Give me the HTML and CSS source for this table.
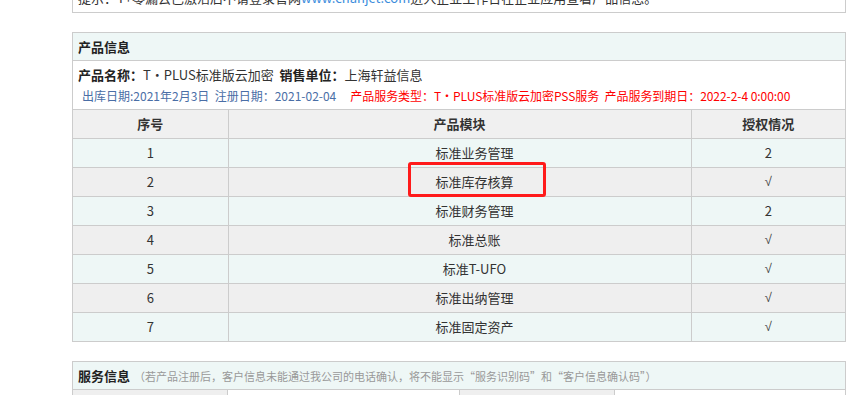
FILE: index.html
```html
<!DOCTYPE html>
<html lang="zh-CN">
<head>
<meta charset="utf-8">
<title>产品信息</title>
<link rel="stylesheet" href="styles.css">
</head>
<body>
<div class="page">
  <div class="box tip">提示：T+零漏云已激活后不请登录官网<a class="link" href="#">www.chanjet.com</a>进入企业工作台在企业应用查看产品信息。</div>

  <div class="box product">
    <div class="box-head">产品信息</div>
    <div class="info">
      <div class="line1"><b>产品名称：</b>T・PLUS标准版云加密&nbsp;&nbsp;<b>销售单位：</b>上海轩益信息</div>
      <div class="line2"><span class="blue">出库日期:2021年2月3日&nbsp;&nbsp;注册日期：2021-02-04</span><span class="red">产品服务类型：T・PLUS标准版云加密PSS服务&nbsp;&nbsp;产品服务到期日：2022-2-4 0:00:00</span></div>
    </div>
    <table class="grid">
      <colgroup><col class="c1"><col><col class="c3"></colgroup>
      <thead>
        <tr><th>序号</th><th>产品模块</th><th>授权情况</th></tr>
      </thead>
      <tbody>
        <tr><td>1</td><td>标准业务管理</td><td>2</td></tr>
        <tr><td>2</td><td>标准库存核算</td><td><span class="ok">√</span></td></tr>
        <tr><td>3</td><td>标准财务管理</td><td>2</td></tr>
        <tr><td>4</td><td>标准总账</td><td><span class="ok">√</span></td></tr>
        <tr><td>5</td><td>标准T-UFO</td><td><span class="ok">√</span></td></tr>
        <tr><td>6</td><td>标准出纳管理</td><td><span class="ok">√</span></td></tr>
        <tr><td>7</td><td>标准固定资产</td><td><span class="ok">√</span></td></tr>
      </tbody>
    </table>
    <div class="mark"></div>
  </div>

  <div class="box service">
    <div class="box-head">服务信息<span class="note">（若产品注册后，客户信息未能通过我公司的电话确认，将不能显示“服务识别码”和“客户信息确认码”）</span></div>
    <table class="kv">
      <tr><td class="k">&nbsp;</td><td class="v">&nbsp;</td><td class="k">&nbsp;</td><td class="v">&nbsp;</td></tr>
    </table>
  </div>
</div>
</body>
</html>
```

FILE: styles.css
```css
html, body {
  margin: 0;
  padding: 0;
  background: #fff;
  overflow: hidden;
}
body {
  font-family: "Noto Sans CJK SC", "Open Sans", sans-serif;
  font-size: 13px;
  color: #333;
}
.page {
  margin-left: 72px;
  width: 774px;
  margin-top: -17px;
}
.box {
  border: 1px solid #cccccc;
  background: #fff;
}
.tip {
  padding: 3px 5px;
  line-height: 22px;
  color: #333;
}
.link {
  color: #3c8ddc;
  text-decoration: none;
}
.product {
  margin-top: 19px;
  position: relative;
}
.box-head {
  height: 27px;
  line-height: 27px;
  padding-left: 5px;
  background: #eef7f6;
  border-bottom: 1px solid #cccccc;
  font-weight: bold;
  color: #222;
}
.info {
  padding: 3px 5px;
  border-bottom: 1px solid #cccccc;
}
.line1, .line2 {
  height: 21px;
  line-height: 21px;
  white-space: nowrap;
}
.line2 {
  font-size: 12px;
}
.line1 b {
  color: #222;
}
.blue {
  color: #4a6ea6;
  margin-left: 4px;
  margin-right: 14px;
}
.red {
  color: #ff0000;
  letter-spacing: -0.05px;
}
.grid {
  width: 100%;
  border-collapse: collapse;
  border-style: hidden;
  table-layout: fixed;
}
.grid .c1 { width: 155px; }
.grid .c3 { width: 154px; }
.grid th, .grid td {
  border: 1px solid #cccccc;
  height: 28px;
  padding: 0;
  line-height: 28px;
  text-align: center;
  font-size: 13px;
}
.grid tbody td:nth-child(2) {
  padding-left: 30px;
}
.grid th {
  background: #f0f0f0;
  font-weight: bold;
  color: #333;
}
.grid tbody tr:nth-child(odd) td { background: #eef7f6; }
.grid tbody tr:nth-child(even) td { background: #efefef; }
.ok {
  display: inline-block;
  height: 28px;
  line-height: 28px;
  vertical-align: top;
  font-family: "Liberation Sans", sans-serif;
  font-size: 13px;
  color: #444;
}
.mark {
  position: absolute;
  left: 335px;
  top: 129px;
  width: 132px;
  height: 29px;
  border: 3px solid #ff1a1a;
  border-radius: 3px;
}
.service {
  margin-top: 19px;
}
.note {
  font-weight: normal;
  color: #999;
  font-size: 11px;
  margin-left: 4px;
}
.kv {
  width: 100%;
  border-collapse: collapse;
  border-style: hidden;
  table-layout: fixed;
}
.kv td {
  border: 1px solid #cccccc;
  height: 28px;
  padding: 0;
}
.kv td:nth-child(1) { width: 154px; }
.kv td:nth-child(2) { width: 231px; }
.kv td:nth-child(3) { width: 154px; }
.kv .k { background: #efefef; }
```
